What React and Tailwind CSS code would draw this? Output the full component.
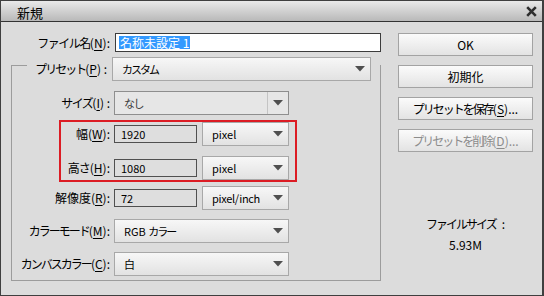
import React from 'react';

const FONT = "font-['Noto_Sans_CJK_JP','Noto_Sans_CJK_SC',sans-serif]";

function Arrow() {
  return (
    <svg width="10" height="6" viewBox="0 0 10 6" className="shrink-0">
      <path d="M0 0H10L5 5.5Z" fill="#4f4f4f" />
    </svg>
  );
}

function Select({ children, className = '', textClass = '' }) {
  return (
    <div
      className={`h-[24px] flex items-center justify-between border border-[#a8a8a8] bg-linear-to-b from-[#f7f7f7] to-[#e2e2e2] pl-[9px] pr-[5px] ${className}`}
    >
      <span className={textClass}>{children}</span>
      <Arrow />
    </div>
  );
}

function Field({ children }) {
  return (
    <div className="w-[83px] h-[18px] flex items-center border border-[#505050] bg-[#dedede] pl-[6px] text-[11px]">
      {children}
    </div>
  );
}

// mnemonic letter
function U({ children }) {
  return <span className="underline underline-offset-2">{children}</span>;
}

// narrow kana run
function K({ children, t = 'tracking-[-1.5px]' }) {
  return <span className={t}>{children}</span>;
}

function Button({ children, disabled, className = '' }) {
  return (
    <div
      className={`h-[23px] flex items-center justify-center border border-[#a3a3a3] bg-linear-to-b from-[#fbfbfb] to-[#e3e3e3] ${
        disabled ? 'text-[#8c8c8c]' : 'text-black'
      } ${className}`}
    >
      {children}
    </div>
  );
}

export default function App() {
  return (
    <div
      className={`w-[544px] h-[296px] flex flex-col overflow-hidden bg-[#dcdcdc] border border-r-2 border-[#3f3f3f] text-[12px] leading-none text-black ${FONT}`}
    >
      {/* title bar */}
      <div className="h-[21px] shrink-0 flex items-center justify-between border-b border-[#333] bg-linear-to-b from-[#e9e9e9] to-[#b9b9b9] pl-[16px] pr-[5px]">
        <span className="text-[13px] pt-[3px]">新規</span>
        <svg width="11" height="11" viewBox="0 0 11 11">
          <path d="M1.2 1.2L9.8 9.8M9.8 1.2L1.2 9.8" stroke="#2e2e2e" strokeWidth="2.6" />
        </svg>
      </div>

      <div className="flex flex-1">
        {/* left side */}
        <div className="w-[381px] pt-[11px] flex flex-col">
          <div className="flex items-center h-[19px]">
            <span className="w-[109px] text-right">
              <K>ファイル名</K>(<U>N</U>):
            </span>
            <div className="ml-[5px] w-[266px] h-[19px] flex items-center border border-[#3c3c3c] bg-white pl-[3px]">
              <span className="bg-[#3399ff] text-white leading-[13px] px-px">名称未設定 1</span>
            </div>
          </div>

          <fieldset className="mt-[5px] ml-[10px] w-[370px] border border-[#9c9c9c] pb-[4px]">
            <legend className="ml-[15px] w-[353px] h-[16px] p-0">
              <div className="flex items-center h-[24px]">
                <span className="w-[80px] text-right">
                  <K t="tracking-[-2px]">プリセット</K>(<U>P</U>) :
                </span>
                <Select className="ml-[5px] w-[259px]" textClass="text-[11px] tracking-[-2px]">
                  カスタム
                </Select>
              </div>
            </legend>

            <div className="flex flex-col pt-[18px]">
              <div className="flex items-center h-[24px]">
                <span className="w-[98px] text-right">
                  <K>サイズ</K>(<U>I</U>) :
                </span>
                <div className="ml-[4px] w-[175px] h-[24px] flex items-center border border-[#8e8e8e] bg-[#e6e6e6]">
                  <span className="flex-1 pl-[9px] text-[11px] tracking-[-1.5px] text-[#3a3a3a]">なし</span>
                  <div className="w-px h-[22px] bg-[#c4c4c4]" />
                  <div className="w-[20px] flex justify-center">
                    <Arrow />
                  </div>
                </div>
              </div>

              <div className="mt-[5px] ml-[47px] w-[238px] border-2 border-[#dc1c24] flex flex-col gap-[10px]">
                <div className="flex items-center h-[24px]">
                  <span className="w-[49px] text-right">
                    幅(<U>W</U>):
                  </span>
                  <div className="ml-[4px]">
                    <Field>1920</Field>
                  </div>
                  <Select className="ml-[5px] w-[87px]" textClass="text-[11px]">
                    pixel
                  </Select>
                </div>
                <div className="flex items-center h-[24px]">
                  <span className="w-[49px] text-right">
                    <K t="tracking-[-1px]">高さ</K>(<U>H</U>):
                  </span>
                  <div className="ml-[4px]">
                    <Field>1080</Field>
                  </div>
                  <Select className="ml-[5px] w-[87px]" textClass="text-[11px]">
                    pixel
                  </Select>
                </div>
              </div>

              <div className="mt-[4px] flex items-center h-[24px]">
                <span className="w-[98px] text-right">
                  解像度(<U>R</U>):
                </span>
                <div className="ml-[4px]">
                  <Field>72</Field>
                </div>
                <Select className="ml-[5px] w-[87px]" textClass="text-[11px] tracking-[-0.3px]">
                  pixel/inch
                </Select>
              </div>

              <div className="mt-[9px] flex items-center h-[24px]">
                <span className="w-[98px] text-right">
                  <K t="tracking-[-2px]">カラーモード</K>(<U>M</U>):
                </span>
                <Select className="ml-[4px] w-[175px]" textClass="text-[11px]">
                  RGB <K t="tracking-[-2px]">カラー</K>
                </Select>
              </div>

              <div className="mt-[9px] flex items-center h-[24px]">
                <span className="w-[98px] text-right">
                  <K t="tracking-[-2px]">カンバスカラー</K>(<U>C</U>):
                </span>
                <Select className="ml-[4px] w-[175px]" textClass="text-[11px]">
                  白
                </Select>
              </div>
            </div>
          </fieldset>
        </div>

        {/* right side */}
        <div className="ml-[16px] w-[135px] pt-[11px] flex flex-col">
          <div className="flex flex-col gap-[9px]">
            <Button>OK</Button>
            <Button>初期化</Button>
            <Button>
              <K t="tracking-[-2px]">プリセットを保存</K>(<U>S</U>)...
            </Button>
            <Button disabled>
              <K t="tracking-[-2px]">プリセットを削除</K>(<U>D</U>)...
            </Button>
          </div>
          <div className="mt-[65px] flex flex-col items-center">
            <span className="leading-[14px] flex">
              <K t="tracking-[-2px]">ファイルサイズ</K>
              <span className="ml-[6px]">:</span>
            </span>
            <span className="mt-[7px] leading-[14px]">5.93M</span>
          </div>
        </div>
      </div>
    </div>
  );
}
